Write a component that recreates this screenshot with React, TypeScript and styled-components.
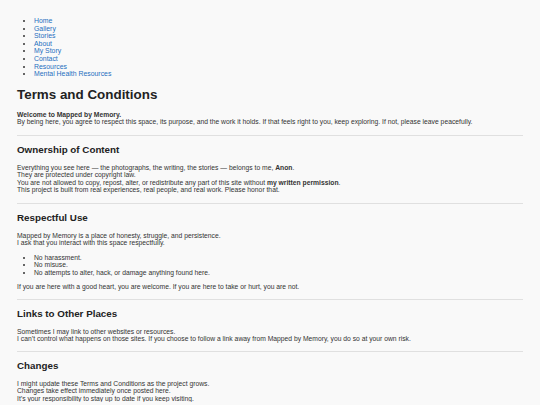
import styled, { createGlobalStyle } from 'styled-components'

const GlobalStyle = createGlobalStyle`
  html, body {
    margin: 0;
    padding: 0;
    background: #f9f9f9;
  }
  body {
    font-family: "Liberation Sans", Arial, sans-serif;
    color: #333;
  }
`

const Page = styled.div`
  padding: 17px 17px 0;
  font-size: 6.75px;
  line-height: 7.5px;
`

const NavList = styled.ul`
  margin: 0;
  padding-left: 17px;
  font-size: 6.9px;
  line-height: 7.6px;

  li::marker {
    color: #333;
  }
`

const NavLink = styled.a`
  color: #1f6fc0;
  text-decoration: none;
`

const Title = styled.h1`
  margin: 9px 0 8px;
  font-size: 13.4px;
  line-height: 16px;
  color: #222;
`

const Text = styled.p`
  margin: 0;

  & + & {
    margin-top: 7.5px;
  }
`

const Divider = styled.hr<{ $gap?: number }>`
  margin: ${p => p.$gap ?? 9.5}px 0 0;
  border: 0;
  border-top: 1px solid #e0e0e0;
`

const Heading = styled.h2`
  margin: 7.5px 0 8px;
  font-size: 9.8px;
  line-height: 12px;
  color: #222;
`

const Rules = styled.ul`
  margin: 7px 0;
  padding-left: 17px;
`

const navItems = [
  'Home',
  'Gallery',
  'Stories',
  'About',
  'My Story',
  'Contact',
  'Resources',
  'Mental Health Resources'
]

function App() {
  return (
    <>
      <GlobalStyle />
      <Page>
        <nav>
          <NavList>
            {navItems.map(item => (
              <li key={item}>
                <NavLink href="#">{item}</NavLink>
              </li>
            ))}
          </NavList>
        </nav>

        <Title>Terms and Conditions</Title>
        <Text>
          <strong>Welcome to Mapped by Memory.</strong>
          <br />
          By being here, you agree to respect this space, its purpose, and the work it holds. If that
          feels right to you, keep exploring. If not, please leave peacefully.
        </Text>

        <Divider />
        <Heading>Ownership of Content</Heading>
        <Text>
          Everything you see here — the photographs, the writing, the stories — belongs to me,{' '}
          <strong>Anon</strong>.
          <br />
          They are protected under copyright law.
          <br />
          You are not allowed to copy, repost, alter, or redistribute any part of this site without{' '}
          <strong>my written permission</strong>.
          <br />
          This project is built from real experiences, real people, and real work. Please honor that.
        </Text>

        <Divider />
        <Heading>Respectful Use</Heading>
        <Text>
          Mapped by Memory is a place of honesty, struggle, and persistence.
          <br />I ask that you interact with this space respectfully.
        </Text>
        <Rules>
          <li>No harassment.</li>
          <li>No misuse.</li>
          <li>No attempts to alter, hack, or damage anything found here.</li>
        </Rules>
        <Text>If you are here with a good heart, you are welcome. If you are here to take or hurt, you are not.</Text>

        <Divider $gap={8.5} />
        <Heading>Links to Other Places</Heading>
        <Text>
          Sometimes I may link to other websites or resources.
          <br />I can’t control what happens on those sites. If you choose to follow a link away from
          Mapped by Memory, you do so at your own risk.
        </Text>

        <Divider $gap={8.5} />
        <Heading>Changes</Heading>
        <Text>
          I might update these Terms and Conditions as the project grows.
          <br />
          Changes take effect immediately once posted here.
          <br />
          It’s your responsibility to stay up to date if you keep visiting.
        </Text>
      </Page>
    </>
  )
}

export default App
